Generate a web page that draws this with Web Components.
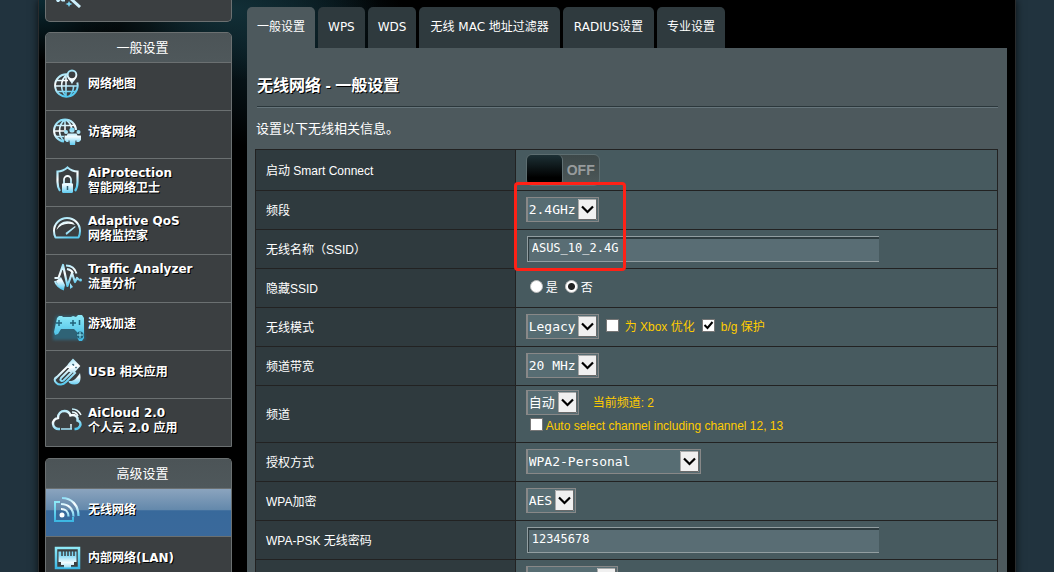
<!DOCTYPE html>
<html lang="zh-CN">
<head>
<meta charset="utf-8">
<meta name="viewport" content="width=device-width, initial-scale=1">
<title>无线网络 - 一般设置</title>
<style>
  html { background: #21333e; scrollbar-width: none; }
  body { margin: 0; color: #fff; font: 12px/15px "DejaVu Sans", "Noto Sans CJK SC", sans-serif; }
</style>
</head>
<body>
<router-frame>
  <nav-group slot="nav" continued>
    <wand-icon></wand-icon>
  </nav-group>
  <nav-group slot="nav" heading="一般设置">
    <nav-item icon="map">网络地图</nav-item>
    <nav-item icon="guest">访客网络</nav-item>
    <nav-item icon="shield">AiProtection<br>智能网络卫士</nav-item>
    <nav-item icon="gauge">Adaptive QoS<br>网络监控家</nav-item>
    <nav-item icon="traffic">Traffic Analyzer<br>流量分析</nav-item>
    <nav-item icon="game">游戏加速</nav-item>
    <nav-item icon="usb">USB 相关应用</nav-item>
    <nav-item icon="cloud">AiCloud 2.0<br>个人云 2.0 应用</nav-item>
  </nav-group>
  <nav-group slot="nav" heading="高级设置" open>
    <nav-item icon="wifi" active>无线网络</nav-item>
    <nav-item icon="lan">内部网络(LAN)</nav-item>
  </nav-group>

  <tab-strip>
    <tab-link active>一般设置</tab-link>
    <tab-link>WPS</tab-link>
    <tab-link>WDS</tab-link>
    <tab-link wide>无线 MAC 地址过滤器</tab-link>
    <tab-link wide>RADIUS设置</tab-link>
    <tab-link>专业设置</tab-link>
  </tab-strip>
  <settings-panel>
    <span slot="title">无线网络 - 一般设置</span>
    <span slot="description">设置以下无线相关信息。</span>
    <wireless-form></wireless-form>
  </settings-panel>
</router-frame>

<script>
const ICONS = {
  map: `<g fill="none" stroke="url(#g)" stroke-width="1.6"><path d="M15.500 5.200A11.300 11.300 0 1 0 25.300 13.500" stroke-width="2"/><path d="M14 5.200v22.600M14.500 6C8 11 8 22 14.500 27.500M17 27.500c3-3 4.500-6 4.600-10.500M5 11.500h11M3.500 17h22.500M5.500 22.500h18.500"/></g>
    <path fill-rule="evenodd" fill="url(#g)" d="M20 15.500c-1-3.500-5.300-5.500-5.300-9.700a5.300 5.300 0 0 1 10.600 0c0 4.200-4.300 6.200-5.300 9.700zM20 2.400a3.400 3.400 0 1 0 0 6.800 3.400 3.400 0 0 0 0-6.800z"/>`,
  guest: `<g fill="none" stroke="url(#g)" stroke-width="1.600"><path d="M24 13A11 11 0 1 0 12 24.500" stroke-width="2"/><path d="M13 3v10M12.500 3C6 8 6 19 12 24M14 3c3 2 5 5 5.500 8M3.500 8.500h19M2 14h12M4 19.500h8"/></g>
    <g fill="url(#p)"><circle cx="20" cy="13" r="2.600"/><circle cx="14" cy="15" r="2"/><circle cx="26.500" cy="15" r="2"/><path d="M15.500 16.500h9l1 2h3.500v4.500l-2 2h-2.500v-1.500h-1l-.5 4.500h-5l-.5-4.500h-1V25h-2l-2-2v-4.500h2.500z"/></g>`,
  shield: `<path fill="none" stroke="url(#g)" stroke-width="2.200" d="M8 26C6 23 5.500 20 5.500 17V6.500c4 0 7-1.500 10-4 3 2.500 6 4 10 4V17c0 4-1 7-2.500 9"/>
    <path fill="none" stroke="url(#g)" stroke-width="1.800" d="M12 18v-3.500a3.500 3.500 0 0 1 7 0V18"/><rect x="10" y="18" width="11" height="10" rx="1.500" fill="url(#p)"/><path stroke="#315f74" stroke-width="1.500" d="M15.500 21v4"/>`,
  gauge: `<path fill="none" stroke="url(#g)" stroke-width="2" stroke-linejoin="round" d="M3.500 24.500C2 22 2 20 2 18a13 13 0 0 1 26 0c0 2 0 4-1.500 6.500z"/>
    <path fill="url(#g)" d="M4.500 17C7 8.500 14 6.500 21 9.500l2 2.500C15 9.500 9 11 4.500 17zM13.500 20l9.500-7 .7 1-9.200 8z"/>`,
  traffic: `<path fill="none" stroke="url(#g)" stroke-width="2.200" stroke-linejoin="round" d="M2.500 17h4L11 4l4.500 21L20 12l3 9 2-4 2 2"/><circle cx="28.500" cy="19" r="1.500" fill="url(#g)"/>
    <path fill="none" stroke="url(#g)" stroke-width="2" d="M14 4.500c5 0 9 3 10.500 8M15 8c3 .5 5 2 6 4M3 20c1 4 5 7.500 9 8.500"/><path fill="url(#p)" d="M4 20l5-4 4 8-1 4-5-2zM18 22l3 4-3 2z"/>`,
  game: `<path fill="#248fb8" opacity=".45" d="M1 24L4 7h26l3 24H1z" filter="url(#blur)"/><path fill="url(#b)" d="M5 9l2-2h3l1 1h8l2-1 3 1 2-2h4l2 3v20l-2 3h-3l-2-4v-5l-3-3H9l-3 5-3 1-1-3z"/><g stroke="#20627a" stroke-width="1.500"><path d="M4 14h6M7 11v6M18 14h6M21 11v6M27.500 11v5"/></g><circle cx="28" cy="26" r="3.500" fill="#20627a"/><path stroke="#8be7fa" d="M28 23v6M25 26h6"/>`,
  usb: `<g fill="none" stroke="url(#g)" stroke-width="2"><path d="M4.500 20.500L16 9l7 7-9 9c-3 3-7 3.500-9.500 1s-2.500-4.500 0-6zM9 21l8-8 2.500 2.500-8 8c-2 1.500-4-.5-2.500-2.500z"/><path fill="url(#g)" d="M17 7.500L21 3l6 6-4.500 5z"/></g><path stroke="#315f74" stroke-width="1.500" d="M20.500 7l1.500 1.500M23.500 10l1 1"/><path fill="url(#p)" d="M28 16c1.500 7 0 11.500-5.500 11.500-4 0-6-1.500-6-3.500 6 .5 8-3 11.500-8z"/>`,
  cloud: `<path fill="none" stroke="url(#g)" stroke-width="2.400" d="M8 24H7a5.500 5.500 0 0 1-1-11c0-4.500 3-7 6.500-7 3 0 5 1.500 6 4.500 4-1.500 8 1 7 5 3 1 3.500 3.500 2.500 5.500-1 2-2.500 3-4.500 3h-1"/><path stroke="url(#p)" stroke-width="1.500" d="M9 24h11M19 24v-5"/><path fill="none" stroke="url(#g)" stroke-width="1.500" d="M20 7c3 0 5 1.500 6 4M20 4c4 0 7 2 9 6"/>`,
  wifi: `<path fill="none" stroke="url(#b)" stroke-width="2" d="M8 7H3v19h18v-4"/><circle cx="10" cy="20" r="2.500" fill="#fff"/><g fill="none" stroke="url(#g)" stroke-width="2.200"><path d="M9 14c4.500 0 7.500 3 7.500 7.500M9 9c7.500 0 12.500 5 12.500 12.500M10 3c9.500 0 16.500 7 16.500 18"/></g>`,
  lan: `<path fill="none" stroke="url(#b)" stroke-width="2.500" d="M4 5h23v20H4z"/><path fill="url(#p)" d="M6.500 8.500h18V19H22v3h-3v2.500h-7V22H9v-3H6.500z"/><path stroke="#3b3f41" stroke-width="1.500" d="M10 8v5M13 8v5M16 8v5M19 8v5M22 8v5"/>`
};
const DEFS = `<defs><linearGradient id="g" gradientUnits="userSpaceOnUse" x1="0" y1="2" x2="8" y2="28"><stop offset="0" stop-color="#5ed0f2"/><stop offset=".5" stop-color="#fff"/><stop offset="1" stop-color="#55c9ef"/></linearGradient>
  <linearGradient id="p" gradientUnits="userSpaceOnUse" x1="0" y1="12" x2="0" y2="29"><stop offset="0" stop-color="#7fd8f5"/><stop offset=".45" stop-color="#f2fbff"/><stop offset="1" stop-color="#4cc6ef"/></linearGradient>
  <linearGradient id="b" x1="0" y1="0" x2="0" y2="1"><stop offset="0" stop-color="#8ee9f7"/><stop offset="1" stop-color="#3cb7e3"/></linearGradient><filter id="blur"><feGaussianBlur stdDeviation="1.500"/></filter></defs>`;

const define = (name, html) => {
  const template = document.createElement('template');
  customElements.define(name, class extends HTMLElement {
    connectedCallback() {
      if (this.shadowRoot) return;
      template.innerHTML = typeof html === 'function' ? html(this) : html;
      this.attachShadow({ mode: 'open' }).append(template.content.cloneNode(true));
    }
  });
};

define('router-frame', `
  <style>
    :host { display: block; }
    .frame { box-sizing: border-box; max-width: 978px; min-height: 100vh; margin: 0 auto; padding: 0 8px 0 6px;
      display: flex; align-items: stretch; gap: 15px; border: solid #2a2c2d; border-width: 0 1px;
      box-shadow: 0 0 8px rgba(0,0,0,.7);
      background:
        radial-gradient(ellipse 150px 70px at 190px 10px, #123038, transparent),
        radial-gradient(ellipse 90px 60px at 0 0, #0b2a33, transparent),
        radial-gradient(ellipse 130px 110px at 240px 40px, #0b2129, transparent), #000; }
    nav { width: 187px; flex: none; display: flex; flex-direction: column; gap: 10px; }
    main { flex: 1; min-width: 0; padding-top: 7px; display: flex; flex-direction: column; }
  </style>
  <div class="frame"><nav><slot name="nav"></slot></nav><main><slot></slot></main></div>`);

define('nav-group', el => `
  <style>
    :host { display: block; box-sizing: border-box; border: 1px solid #6b7071; border-radius: 5px 5px 0 0; overflow: hidden;
      background: #3b3f41; }
    :host([continued]) { height: 22px; border-top: 0; border-radius: 0 0 5px 5px; }
    :host([open]) { border-bottom: 0; margin-top: 1px; }
    h2 { margin: 0; background: linear-gradient(#4c5457, #4f585b); text-align: center; color: #fff;
      font: 13px/29px "DejaVu Sans", "Noto Sans CJK SC", sans-serif; text-indent: 8px; }
  </style>
  ${el.hasAttribute('heading') ? `<h2>${el.getAttribute('heading')}</h2>` : ''}<slot></slot>`);

define('nav-item', el => `
  <style>
    :host { display: block; border-top: 1px solid #6b7071; }
    a { box-sizing: border-box; height: 47px; padding: 0 6px 6px; display: flex; align-items: center; gap: 6px;
      color: #fff; text-decoration: none; font-weight: bold; text-shadow: 1px 1px 0 #000; }
    span { padding-top: 2px; }
    :host([active]) a { background: linear-gradient(#8ba4be, #6388ab 45%, #38699b 46%, #3a699b); }
    svg { width: 30px; height: 30px; flex: none; overflow: visible; }
  </style>
  <a href="#${el.getAttribute('icon')}"><svg viewBox="0 0 30 30" aria-hidden="true">${DEFS}${ICONS[el.getAttribute('icon')]}</svg><span><slot></slot></span></a>`);

define('wand-icon', `
  <style>:host { display: block; padding-left: 8px; } svg { display: block; }</style>
  <svg width="30" height="8" viewBox="0 0 30 8" aria-hidden="true">
    <path d="M17-1L26 7" stroke="#cdeffc" stroke-width="3"/><path fill="#7bd5f4" d="M15 1l1 2 2.500 1L16 5l-1 2-1-2-2.500-1L14 3z"/><path fill="#c8efff" d="M2 0h9v1.500H8L6.500 0 5 2H3z"/>
  </svg>`);

define('tab-strip', `
  <style>:host { display: flex; gap: 3px; }</style><slot></slot>`);

define('tab-link', `
  <style>
    :host { display: block; }
    a { display: block; padding: 0 10px 1px; border-radius: 5px 5px 0 0; background: #2f3a3e; color: #fff; text-decoration: none;
      line-height: 40px; white-space: nowrap; }
    :host([wide]) a { padding: 0 11px 1px; }
    :host([active]) a { background: #4d595d; }
  </style><a href="#tab"><slot></slot></a>`);

define('settings-panel', `
  <style>
    :host { display: block; flex: 1; padding: 26px 9px 0 8px; background: #4d595d; }
    h1 { margin: 0 0 0 2px; padding: 0 0 9px; border-bottom: 1px solid #2b373b;
      box-shadow: 0 1px 0 #66757b; font: bold 16px/23px "Liberation Sans", "Noto Sans CJK SC", sans-serif; text-shadow: 1px 1px 0 #000; }
    p { margin: 12px 1px 10px; font: 13px/20px "Liberation Sans", "Noto Sans CJK SC", sans-serif; }
  </style>
  <h1><slot name="title"></slot></h1><p><slot name="description"></slot></p><slot></slot>`);

define('smart-switch', `
  <style>
    :host { display: block; }
    button { box-sizing: border-box; width: 74px; height: 32px; padding: 0; display: flex; align-items: center; border: 1px solid #5d6d70; border-radius: 6px;
      background: linear-gradient(#3d4849, #4d5859); color: #979b9c; font: bold 14px/28px "Liberation Sans", sans-serif; }
    i { box-sizing: border-box; width: 36px; height: 30px; border-right: 1px solid #627174; border-radius: 5px; background: linear-gradient(#1d3035, #000 75%); }
    span { flex: 1; }
  </style>
  <button type="button" role="switch" aria-checked="false" aria-label="启动 Smart Connect"><i></i><span>OFF</span></button>`);

define('highlight-box', `
  <style>:host { position: absolute; left: -2px; top: -9px; box-sizing: border-box; width: 112px; height: 89px;
    border: 3px solid #ff2116; border-radius: 4px; pointer-events: none; z-index: 1; }</style>`);

const select = (id, options, extra = '') => `<span class="select"><select id="${id}" ${extra}>${options.map(o => `<option>${o}</option>`).join('')}</select><svg viewBox="0 0 19 21" aria-hidden="true"><path fill="#f0f0f0" d="M0 0h19v21H0z"/><path fill="none" stroke="#aaa" d="M.5 21V.5H19"/><path fill="none" stroke="#696969" d="M18.500 0v20.500H0"/><path fill="none" stroke="#000" stroke-width="2.200" d="M4 7.500l5.500 5.500L15 7.500"/></svg></span>`;
const row = (id, label, content) => `<tr><th scope="row"><label for="${id}">${label}</label></th><td>${content}</td></tr>`;

define('wireless-form', `
  <style>
    :host { display: block; font: 12px/18px "Liberation Sans", "Noto Sans CJK SC", sans-serif; }
    table { width: 100%; border-collapse: collapse; table-layout: fixed; }
    th, td { box-sizing: border-box; height: 39px; padding: 0 10px; border: 1px solid #222; text-align: left; vertical-align: middle; }
    th { width: 35%; padding-top: 2px; background: #2f3a3e; font-weight: normal; }
    td { position: relative; padding-bottom: 1px; background: #475a5f; }
    .tall th, .tall td { height: 41px; }
    .double th, .double td { height: 57px; }
    .double td { padding-bottom: 3px; }
    .line { display: flex; align-items: center; }
    .select { position: relative; display: block; width: fit-content; }
    .select svg { position: absolute; right: 2px; top: 2px; width: 19px; height: 21px; pointer-events: none; }
    select { display: block; box-sizing: border-box; height: 25px; margin: 0; padding: 0 22px 0 1px; appearance: none; border: solid #888; border-width: 1px 1px 1px 2px;
      border-radius: 0; background: #576d73; color: #fff; font: 13px/21px "DejaVu Sans Mono", "Noto Sans CJK SC", monospace; }
    input { margin: 0; flex: none; }
    input[type=text] { display: block; box-sizing: border-box; width: 100%; max-width: 352px; height: 26px; margin-left: 1px; padding: 0 4px 2px;
      border: solid #929ea1; border-width: 1px 0 1px 1px; border-radius: 0; background: #596d74; box-shadow: inset 1px 2px 0 #2e3c40; color: #fff;
      font: 12px/20px "DejaVu Sans Mono", monospace; }
    input[type=radio], input[type=checkbox] { box-sizing: border-box; width: 13px; height: 13px; appearance: none; background: #fff; border: 1px solid #777; }
    input[type=radio] { border-radius: 50%; border-color: #bbb; }
    input[type=radio]:checked { background: radial-gradient(circle, #222 0 3px, #fff 4px); }
    input[type=radio], input[type=checkbox] { margin-bottom: 3px; }
    .check { position: relative; display: inline-flex; align-items: center; }
    .check svg { position: absolute; left: 0; top: 1px; width: 13px; height: 13px; pointer-events: none; visibility: hidden; }
    .check input:checked ~ svg { visibility: visible; }
    .options { gap: 7px; }
    .options .check { gap: 6px; }
    .radios { gap: 7px; padding-left: 4px; }
    .radios label, .auto { display: flex; align-items: center; gap: 3px; }
    .auto { padding: 2px 0 0 4px; }
    .channel { gap: 14px; }
    .note { color: #fc0; }
  </style>
  <table>
    <tr class="tall"><th scope="row">启动 Smart Connect</th><td><smart-switch></smart-switch></td></tr>
    ${row('band', '频段', select('band', ['2.4GHz', '5GHz']) + '<highlight-box></highlight-box>')}
    ${row('ssid', '无线名称（SSID）', '<input type="text" id="ssid" value="ASUS_10_2.4G">')}
    <tr><th scope="row">隐藏SSID</th><td><div class="line radios"><label><input type="radio" name="hide">是</label><label><input type="radio" name="hide" checked>否</label></div></td></tr>
    ${row('mode', '无线模式', `<div class="line options">${select('mode', ['Legacy', 'Auto'])}
      <label class="check note"><input type="checkbox">为 Xbox 优化</label>
      <label class="check note"><input type="checkbox" checked>b/g 保护<svg viewBox="0 0 13 13" aria-hidden="true"><path fill="none" stroke="#000" stroke-width="2" d="M2.500 6l3 3 5-6"/></svg></label></div>`)}
    ${row('width', '频道带宽', select('width', ['20 MHz', '40 MHz']))}
    <tr class="double"><th scope="row"><label for="channel">频道</label></th><td>
      <div class="line channel">${select('channel', ['自动', '1'])}<span class="note">当前频道: 2</span></div>
      <label class="auto note"><input type="checkbox">Auto select channel including channel 12, 13</label></td></tr>
    ${row('auth', '授权方式', select('auth', ['WPA2-Personal', 'WPA/WPA2-Enterprise']))}
    ${row('crypto', 'WPA加密', select('crypto', ['AES']))}
    ${row('psk', 'WPA-PSK 无线密码', '<input type="text" id="psk" value="12345678">')}
    <tr><th></th><td>${select('frames', ['非强制启用'], 'aria-label="受保护的管理帧"')}</td></tr>
  </table>`);
</script>
</body>
</html>
